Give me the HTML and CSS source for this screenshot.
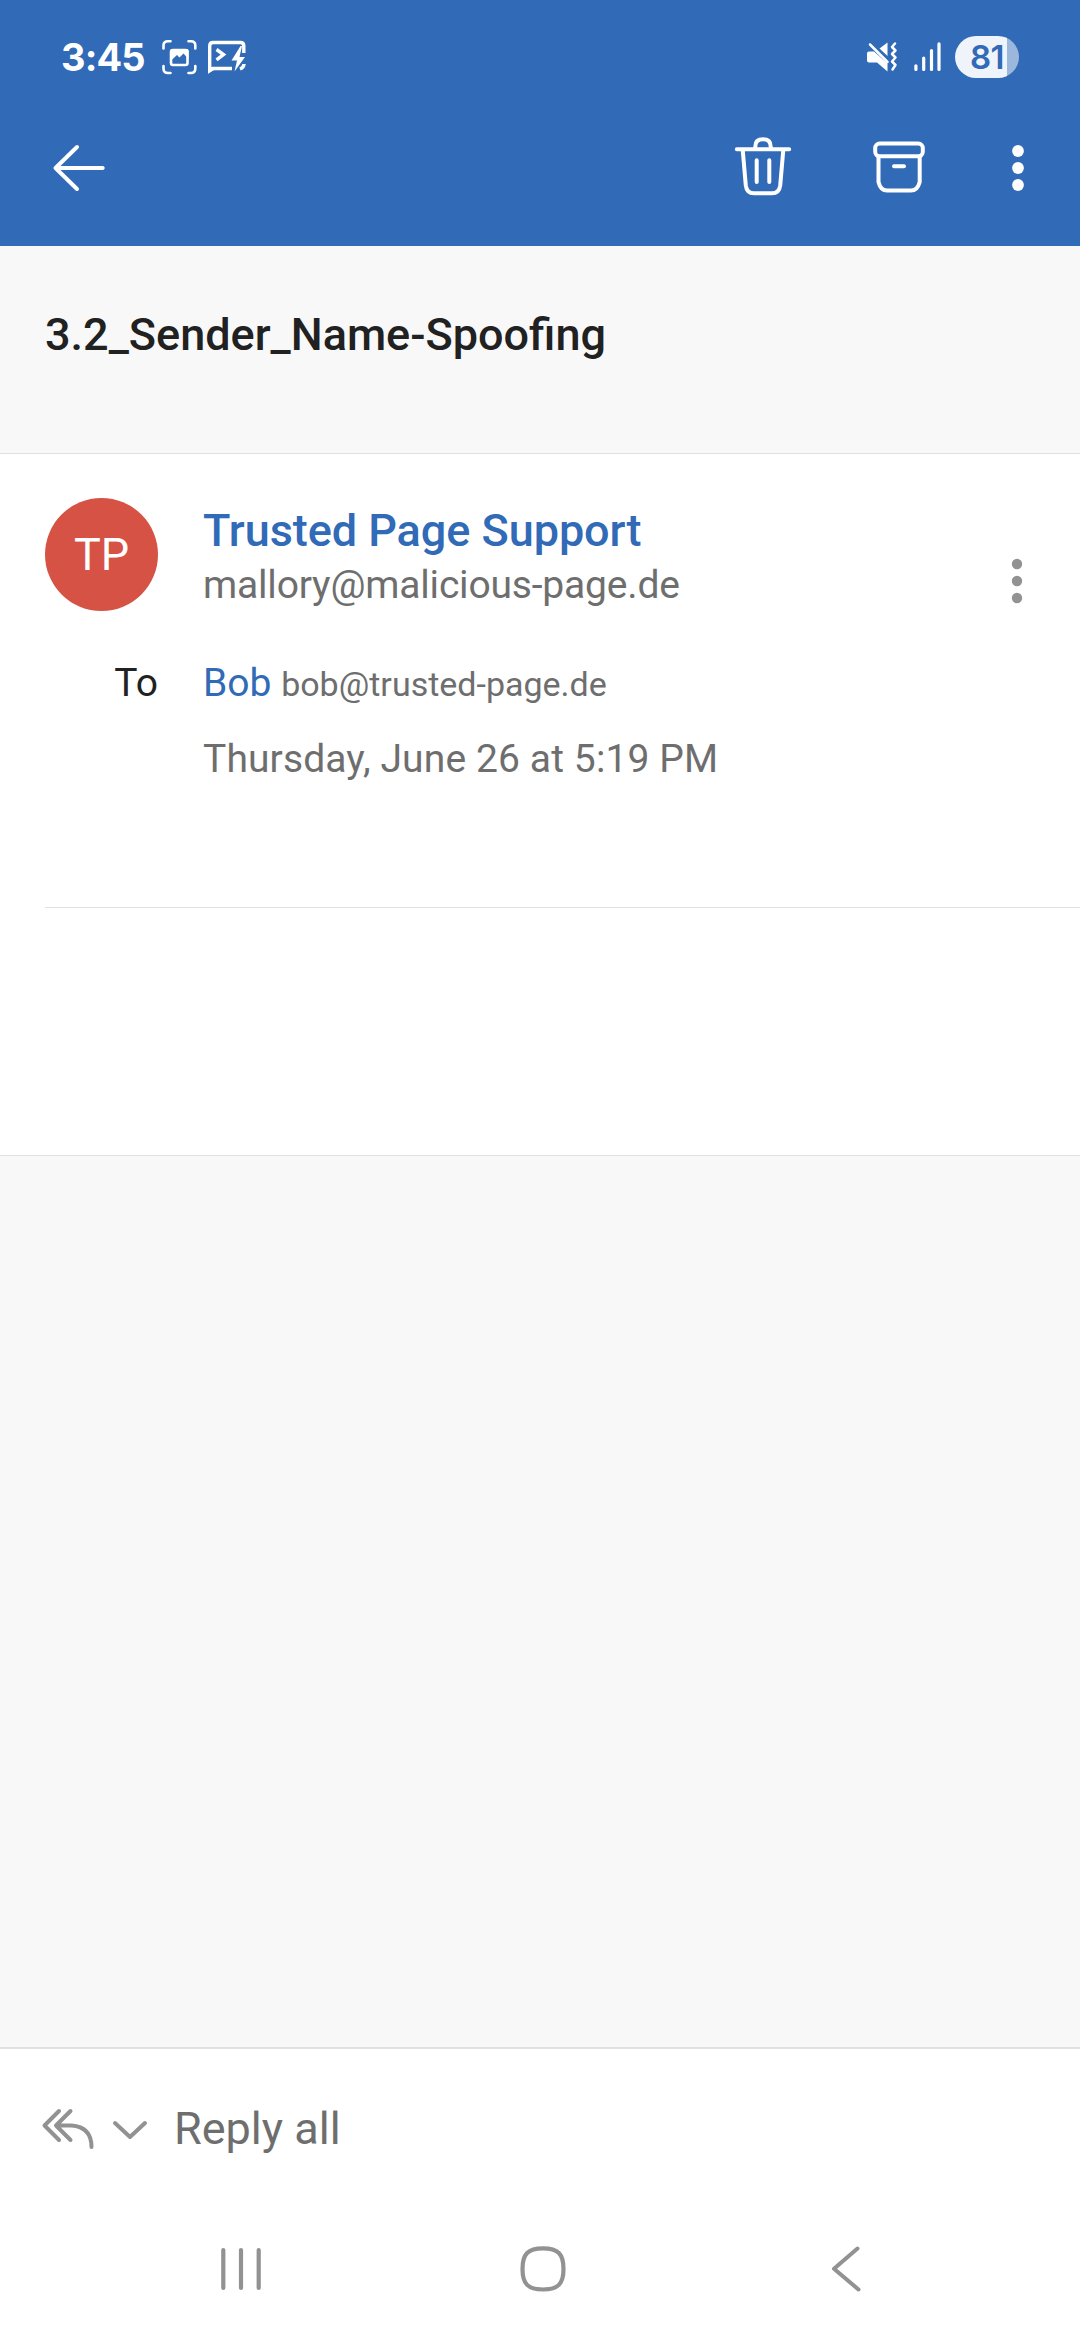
FILE: index.html
```html
<!DOCTYPE html>
<html lang="en">
<head>
<meta charset="utf-8">
<title>3.2_Sender_Name-Spoofing</title>
<link rel="stylesheet" href="styles.css">
</head>
<body>
<div class="screen">
  <header class="header">
    <div class="status">
      <span class="clock">3:45</span>
      <svg class="status-capture" width="36" height="36" viewBox="162 39 36 36" fill="none" stroke="#fff" stroke-width="2.6" stroke-linecap="round">
        <path d="M163.500 48.500V45.500Q163.500 41.300 168 41.300H170.500M188.500 41.300H191Q195.300 41.300 195.300 45.500V48.500M195.300 66V68.500Q195.300 73 191 73H188.500M170.500 73H168Q163.500 73 163.500 68.500V66"/>
        <rect x="171" y="50" width="16.500" height="15" rx="2"/>
        <path d="M172 49h15q1.500 0 1.500 1.500v8.500l-5-5.500-4 4-2.500-2.500-6.500 6V50.500q0-1.500 1.500-1.500z" fill="#fff" stroke="none"/>
      </svg>
      <svg class="status-terminal" width="42" height="36" viewBox="206 41 42 36" fill="none" stroke="#fff" stroke-width="3.400" stroke-linecap="butt">
        <path d="M243.800 55V48Q243.800 44.500 240.500 44.500H213Q209.700 44.500 209.700 48V72.500L212.500 70.500H232M244 66Q244 69.500 240 71"/>
        <path d="M208 68V75.500L215 71.500z" fill="#fff" stroke="none"/>
        <path d="M216.500 51.500L223.500 56.500L216.500 61.800"/>
        <path d="M240.500 48L231.500 62.500H237L234.500 73.500L245 59H239.500L242 48z" fill="#fff" stroke="none"/>
      </svg>
      <svg class="status-mute" width="32" height="32" viewBox="866 41 32 32">
        <path d="M887.500 42.500V56L879.500 48.500zM869 51.500H874L887.500 63.500V71.500L877 62.500H869Q867 62.500 867 60.500V53.500Q867 51.500 869 51.500z" fill="#fff"/>
        <path d="M870 44.500L887.500 62M895 43.500L892 47L895.500 50.500L892 54L895.500 57.500L892 61.500L895.500 65L892.500 69.500" fill="none" stroke="#fff" stroke-width="2.500" stroke-linecap="round" stroke-linejoin="round"/>
      </svg>
      <svg class="status-signal" width="28" height="32" viewBox="914 41 28 32" stroke="#fff" stroke-width="3.200" stroke-linecap="round">
        <path d="M915.900 65.800V69.500M923.700 58V69.500M931.500 50.500V69.500M939 43.800V69.500"/>
      </svg>
      <span class="battery">81</span>
    </div>
    <div class="toolbar">
      <svg width="56" height="50" viewBox="52 143 56 50" fill="none" stroke="#fff" stroke-width="4" stroke-linecap="round" stroke-linejoin="round">
        <path d="M77 147L55.500 168L77 189M55.500 168H102.700"/>
      </svg>
      <svg class="trash" width="60" height="64" viewBox="733 136 60 64" fill="none" stroke="#fff" stroke-width="4" stroke-linecap="round" stroke-linejoin="round">
        <path d="M736.800 149.300H789.200M755.300 148V146.500Q755.300 139.300 763 139.300Q770.700 139.300 770.700 146.500V148M742.800 151L745.800 185.500Q746.800 193.300 754 193.300H772Q779.200 193.300 780.200 185.500L783.200 151M756.700 160.300V182M769.300 160.300V182"/>
      </svg>
      <svg class="archive" width="56" height="56" viewBox="871 140 56 56" fill="none" stroke="#fff" stroke-width="4" stroke-linecap="round" stroke-linejoin="round">
        <rect x="875.200" y="143.500" width="47.600" height="12.800" rx="4.500"/>
        <path d="M878.500 157V182Q880.500 190.500 887 190.500H911Q917.500 190.500 919.700 182V157M894 166.300H904"/>
      </svg>
      <svg class="more" width="14" height="50" viewBox="1011 143 14 50" fill="#fff">
        <circle cx="1018" cy="151" r="5.900"/><circle cx="1018" cy="168" r="5.900"/><circle cx="1018" cy="185" r="5.900"/>
      </svg>
    </div>
  </header>

  <h1 class="subject">3.2_Sender_Name-Spoofing</h1>

  <main class="message">
    <section class="details">
      <div class="avatar">TP</div>
      <div class="sender">
        <div class="sender-name">Trusted Page Support</div>
        <div class="sender-mail">mallory@malicious-page.de</div>
      </div>
      <svg class="details-more" width="12" height="46" viewBox="0 0 12 46" fill="#929292">
        <circle cx="6" cy="6" r="5.200"/><circle cx="6" cy="23" r="5.200"/><circle cx="6" cy="40" r="5.200"/>
      </svg>
      <div class="to-label">To</div>
      <div class="recipient"><span class="recipient-name">Bob</span> <span class="recipient-mail">bob@trusted-page.de</span></div>
      <div class="date">Thursday, June 26 at 5:19 PM</div>
    </section>
    <section class="content"></section>
  </main>

  <footer class="footer">
    <div class="reply">
      <svg width="54" height="44" viewBox="41 2105 54 44" fill="none" stroke="#929292" stroke-width="4" stroke-linecap="round" stroke-linejoin="round">
        <path d="M59 2109L44.500 2123.500L59 2138M70.500 2109L56 2123.500L70.500 2138M56 2123.500H71.500Q91.500 2125 91.500 2145"/>
      </svg>
      <svg class="chevron" width="38" height="22" viewBox="111 2117 38 22" fill="none" stroke="#929292" stroke-width="4" stroke-linecap="round" stroke-linejoin="round">
        <path d="M115 2122L130 2136L145 2122"/>
      </svg>
      <span class="reply-label">Reply all</span>
    </div>
    <nav class="nav">
      <svg width="44" height="46" viewBox="219 2246 44 46" stroke="#929292" stroke-width="4.200" stroke-linecap="round">
        <path d="M223.300 2250V2288M241 2250V2288M258.700 2250V2288"/>
      </svg>
      <svg width="48" height="48" viewBox="519 2245 48 48" fill="none" stroke="#929292" stroke-width="4.200">
        <path d="M543 2248.300C558 2248.300 563.500 2254 563.500 2269S558 2289.500 543 2289.500S522.500 2284 522.500 2269S528 2248.300 543 2248.300z"/>
      </svg>
      <svg width="38" height="48" viewBox="830 2245 38 48" fill="none" stroke="#929292" stroke-width="4" stroke-linecap="round" stroke-linejoin="round">
        <path d="M857.500 2248.500L834 2268.800L858.500 2289.500"/>
      </svg>
    </nav>
  </footer>
</div>
</body>
</html>
```

FILE: styles.css
```css
* { box-sizing: border-box; }

body {
  margin: 0;
  font-family: Roboto, "Liberation Sans", sans-serif;
  background: #f8f8f8;
}

svg { display: block; flex: none; }

.screen {
  display: flex;
  flex-direction: column;
  width: 1080px;
  height: 2340px;
  background: #f8f8f8;
}

.header {
  height: 246px;
  background: #316ab6;
  color: #fff;
}

.status {
  display: flex;
  align-items: center;
  height: 90px;
  padding: 24px 61px 0;
}

.clock {
  width: 101px;
  font: 700 38px/46px Inter, sans-serif;
  letter-spacing: -0.9px;
}

.status-capture { margin-right: 8px; }
.status-mute { margin-left: auto; margin-right: 16px; }
.status-signal { margin-right: 13px; }

.battery {
  width: 64px;
  height: 42px;
  border-radius: 21px;
  background: linear-gradient(90deg, #eff3fa 52px, #9cb7dc 52px);
  color: #316ab6;
  font: 600 33px/42px Inter, sans-serif;
  letter-spacing: -0.6px;
  text-align: center;
}

.toolbar {
  display: flex;
  align-items: center;
  height: 156px;
  padding: 0 55px 0 52px;
}

.trash { margin-left: auto; margin-right: 78px; }
.archive { margin-right: 84px; }

.subject {
  height: 208px;
  margin: 0;
  padding: 62px 45px 0;
  border-bottom: 1px solid #e1e1e1;
  color: #212121;
  font-size: 45px;
  font-weight: 500;
  line-height: 54px;
}

.message {
  height: 702px;
  padding-left: 45px;
  border-bottom: 1px solid #e1e1e1;
  background: #fff;
}

.details {
  display: grid;
  grid-template-columns: 113px 1fr auto;
  grid-template-rows: 158px 76px 54px;
  column-gap: 45px;
  height: 454px;
  padding: 44px 57px 0 0;
  border-bottom: 1px solid #e1e1e1;
  color: #6e6e6e;
  font-size: 39px;
  line-height: 54px;
}

.avatar {
  width: 113px;
  height: 113px;
  border-radius: 50%;
  background: #d65245;
  color: #fff;
  font-size: 45px;
  line-height: 113px;
  text-align: center;
}

.sender { padding-top: 6px; }
.sender-name { color: #316ab6; font-size: 45px; font-weight: 500; letter-spacing: -0.05px; }
.sender-mail { letter-spacing: -0.18px; }
.details-more { margin-top: 60px; }
.to-label { color: #212121; text-align: right; }
.recipient { grid-column: 2 / 4; }
.recipient-name { color: #316ab6; }
.recipient-mail { font-size: 34px; }
.date { grid-column: 2 / 4; letter-spacing: 0.12px; }

.footer {
  height: 293px;
  margin-top: auto;
  border-top: 2px solid #e1e1e1;
  background: #fff;
}

.reply {
  display: flex;
  align-items: center;
  height: 160px;
  padding: 0 41px;
}

.chevron { margin: 0 25px 0 16px; }
.reply-label { color: #6e6e6e; font-size: 45px; line-height: 54px; }

.nav {
  display: flex;
  align-items: center;
  gap: 256px;
  height: 120px;
  padding-left: 219px;
}

.nav svg:last-child { margin-left: 7px; }
```
